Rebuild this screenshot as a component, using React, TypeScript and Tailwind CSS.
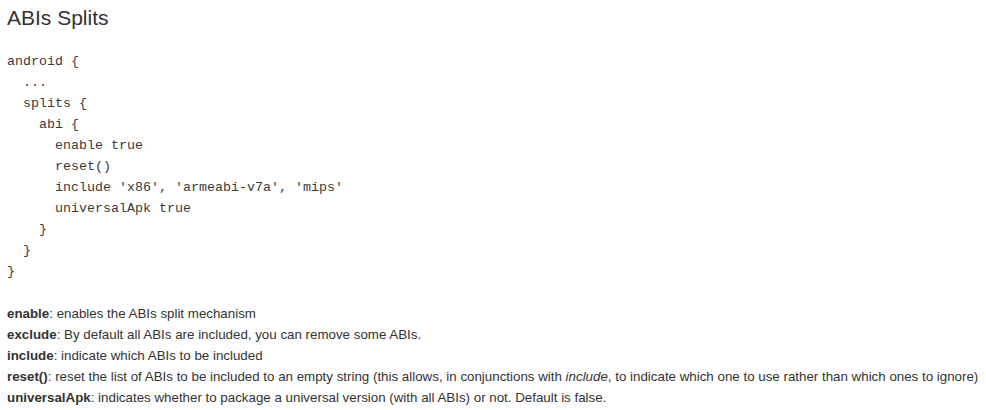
import React from "react";

const code = `android {
  ...
  splits {
    abi {
      enable true
      reset()
      include 'x86', 'armeabi-v7a', 'mips'
      universalApk true
    }
  }
}`;

export default function App() {
  return (
    <div className="w-[986px] h-[410px] bg-white text-[#333] overflow-hidden px-[7px]" style={{ fontFamily: '"Liberation Sans", Arial, sans-serif' }}>
      <h1 className="text-[21px] leading-[30px] pt-[3px] font-normal">ABIs Splits</h1>
      <pre className="mt-[18px] text-[13.33px] leading-[21px] text-[#3a3a3a]" style={{ fontFamily: '"Liberation Mono", "Courier New", monospace' }}>{code}</pre>
      <div className="mt-[21px] text-[13.33px] leading-[21px]">
        <div><b>enable</b>: enables the ABIs split mechanism</div>
        <div><b>exclude</b>: By default all ABIs are included, you can remove some ABIs.</div>
        <div><b>include</b>: indicate which ABIs to be included</div>
        <div><b>reset()</b>: reset the list of ABIs to be included to an empty string (this allows, in conjunctions with <i>include</i>, to indicate which one to use rather than which ones to ignore)</div>
        <div><b>universalApk</b>: indicates whether to package a universal version (with all ABIs) or not. Default is false.</div>
      </div>
    </div>
  );
}
